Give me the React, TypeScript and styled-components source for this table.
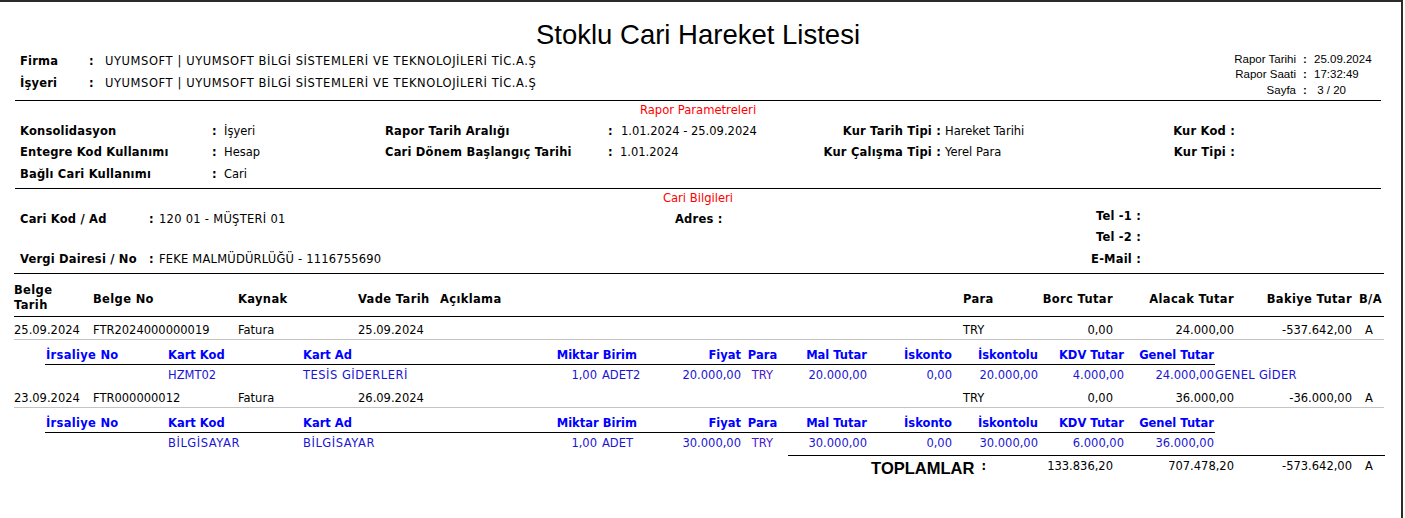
import React from 'react';
import styled, { createGlobalStyle } from 'styled-components';

const GlobalStyle = createGlobalStyle`
  html, body { margin: 0; padding: 0; background: #fff; }
  body {
    font-family: "DejaVu Sans", Verdana, sans-serif;
    font-size: 11.5px;
    color: #000;
  }
  * { box-sizing: border-box; }
`;

const Page = styled.div`
  width: 1403px;
  height: 518px;
  border-top: 2px solid #2b2b2b;
  border-right: 2px solid #2b2b2b;
  overflow: hidden;
`;

const Band = styled.section<{ $rule?: boolean }>`
  margin-left: 15px;
  width: 1366px;
  border-bottom: ${(p) => (p.$rule ? '1px solid #000' : 'none')};
`;

const HeaderBand = styled(Band)`
  padding: 18px 0 2px;
`;

const Title = styled.h1`
  margin: 0;
  font: 400 27.5px/30px "Liberation Sans", Arial, sans-serif;
  text-align: center;
  color: #000;
`;

const InfoRow = styled.div`
  display: flex;
  justify-content: space-between;
  align-items: flex-start;
  height: 48px;
`;

const CompanyGrid = styled.div`
  display: grid;
  grid-template-columns: 69px 16px auto;
  grid-auto-rows: 22px;
  line-height: 22px;
  padding-left: 5px;
`;

const MetaGrid = styled.div`
  display: grid;
  grid-template-columns: auto 18px 67px;
  font: 400 11.5px/15.3px "Liberation Sans", Arial, sans-serif;
  padding-top: 2px;
`;

const MetaLabel = styled.span`
  text-align: right;
  white-space: nowrap;
`;

const MetaColon = styled.span`
  text-align: center;
  font-weight: bold;
`;

const Label = styled.span<{ $right?: boolean; $shift?: number }>`
  font-weight: bold;
  white-space: nowrap;
  letter-spacing: 0.2px;
  text-align: ${(p) => (p.$right ? 'right' : 'left')};
  padding-top: ${(p) => p.$shift ?? 0}px;
`;

const Value = styled.span<{ $pl?: number; $shift?: number; $track?: number }>`
  white-space: nowrap;
  padding-left: ${(p) => p.$pl ?? 0}px;
  padding-top: ${(p) => p.$shift ?? 0}px;
  letter-spacing: ${(p) => p.$track ?? 0}px;
`;

const SectionTitle = styled.div`
  color: #ff0000;
  font-size: 11.6px;
  line-height: 19.5px;
  text-align: center;
`;

const ParamBand = styled(Band)`
  padding-bottom: 3px;
`;

const ParamGrid = styled.div`
  display: grid;
  grid-template-columns: 192px 12px 161px 223px 12px 180px 141px 159px 135px;
  grid-auto-rows: 21.5px;
  line-height: 21.5px;
  padding-left: 5px;
`;

const CariGrid = styled.div`
  display: grid;
  grid-template-columns: 129px 10px 516px 300px 166px;
  grid-template-rows: repeat(3, 21.5px);
  line-height: 14px;
  padding-left: 5px;
`;

const Cell = styled.div<{ $col: number; $row: number; $end?: boolean }>`
  grid-column: ${(p) => p.$col};
  grid-row: ${(p) => p.$row};
  display: flex;
  justify-content: ${(p) => (p.$end ? 'flex-end' : 'flex-start')};
`;

const Table = styled.div`
  margin-left: 14px;
  width: 1370px;
  border-top: 1px solid #000;
`;

const mainCols = '79px 145px 120px 82px 523px 67px 83px 121px 118px 32px';

const HeadRow = styled.div`
  display: grid;
  grid-template-columns: ${mainCols};
  align-items: start;
  height: 43px;
  padding-top: 8.6px;
  border-bottom: 1px solid #000;
  font-weight: bold;
  line-height: 15.2px;
`;

const HeadCell = styled.div<{ $align?: string; $pl?: number; $single?: boolean }>`
  text-align: ${(p) => p.$align ?? 'left'};
  padding-left: ${(p) => p.$pl ?? 0}px;
  margin-top: ${(p) => (p.$single ? 9.5 : 0)}px;
  letter-spacing: 0.35px;
  white-space: nowrap;
`;

const DataRow = styled.div`
  display: grid;
  grid-template-columns: ${mainCols};
  height: 23px;
  padding-top: 3.5px;
  line-height: 18.5px;
  border-bottom: 1px solid #c4c4c4;
`;

const DataCell = styled.div<{ $align?: string; $pl?: number }>`
  text-align: ${(p) => p.$align ?? 'left'};
  padding-left: ${(p) => p.$pl ?? 0}px;
  white-space: nowrap;
`;

const SubBlock = styled.div`
  margin-left: 31px;
  width: 1170px;
`;

const subCols = '123px 135px 197px 98px 44px 100px 41px 85px 85px 86px 86px 90px 0px';

const SubHead = styled.div`
  display: grid;
  grid-template-columns: ${subCols};
  height: 25px;
  padding-top: 5.5px;
  line-height: 18.5px;
  border-bottom: 1px solid #000;
  font-weight: bold;
  color: #0000ff;
`;

const SubData = styled.div`
  display: grid;
  grid-template-columns: ${subCols};
  height: 20px;
  padding-top: 1px;
  line-height: 19px;
  color: #1a14d4;
`;

const SubCell = styled.div<{
  $align?: string;
  $pl?: number;
  $pr?: number;
  $span?: number;
  $tint?: string;
  $track?: number;
}>`
  grid-column: ${(p) => (p.$span ? `span ${p.$span}` : 'auto')};
  text-align: ${(p) => p.$align ?? 'left'};
  padding-left: ${(p) => p.$pl ?? 0}px;
  padding-right: ${(p) => p.$pr ?? 0}px;
  letter-spacing: ${(p) => p.$track ?? 0}px;
  white-space: nowrap;
  ${(p) => (p.$tint ? `color: ${p.$tint};` : '')}
`;

const TotalsRow = styled.div`
  display: grid;
  grid-template-columns: 242px 83px 121px 118px 32px;
  margin-top: 2px;
  margin-left: 774px;
  width: 597px;
  border-top: 1px solid #000;
  line-height: 20px;
`;

const TotalsLabel = styled.div`
  display: flex;
  justify-content: flex-end;
  align-items: flex-start;
  padding-right: 44px;
`;

const TotalsWord = styled.span`
  font: 700 16.5px/20px "Liberation Sans", Arial, sans-serif;
  padding-top: 2px;
  margin-right: 7px;
`;

const TotalsColon = styled.span`
  font-weight: bold;
`;

type Line = {
  tarih: string;
  no: string;
  kaynak: string;
  vade: string;
  borc: string;
  alacak: string;
  bakiye: string;
  item: {
    kod: string;
    kodTrack: number;
    ad: string;
    adTrack: number;
    miktar: string;
    birim: string;
    fiyat: string;
    mal: string;
    isk: string;
    iskl: string;
    kdv: string;
    genel: string;
    extra?: string;
  };
};

const lines: Line[] = [
  {
    tarih: '25.09.2024',
    no: 'FTR2024000000019',
    kaynak: 'Fatura',
    vade: '25.09.2024',
    borc: '0,00',
    alacak: '24.000,00',
    bakiye: '-537.642,00',
    item: {
      kod: 'HZMT02',
      kodTrack: 0,
      ad: 'TESİS GİDERLERİ',
      adTrack: 0.5,
      miktar: '1,00',
      birim: 'ADET2',
      fiyat: '20.000,00',
      mal: '20.000,00',
      isk: '0,00',
      iskl: '20.000,00',
      kdv: '4.000,00',
      genel: '24.000,00',
      extra: 'GENEL GİDER',
    },
  },
  {
    tarih: '23.09.2024',
    no: 'FTR000000012',
    kaynak: 'Fatura',
    vade: '26.09.2024',
    borc: '0,00',
    alacak: '36.000,00',
    bakiye: '-36.000,00',
    item: {
      kod: 'BİLGİSAYAR',
      kodTrack: 0.55,
      ad: 'BİLGİSAYAR',
      adTrack: 0.55,
      miktar: '1,00',
      birim: 'ADET',
      fiyat: '30.000,00',
      mal: '30.000,00',
      isk: '0,00',
      iskl: '30.000,00',
      kdv: '6.000,00',
      genel: '36.000,00',
    },
  },
];

const SubHeader = () => (
  <SubHead>
    <SubCell $pl={1} $track={0.3}>İrsaliye No</SubCell>
    <SubCell>Kart Kod</SubCell>
    <SubCell>Kart Ad</SubCell>
    <SubCell $span={2} $align="right" $pr={5}>Miktar Birim</SubCell>
    <SubCell $align="right" $pr={1}>Fiyat</SubCell>
    <SubCell $align="center">Para</SubCell>
    <SubCell $align="right" $pr={1}>Mal Tutar</SubCell>
    <SubCell $align="right" $pr={1}>İskonto</SubCell>
    <SubCell $align="right" $pr={1}>İskontolu</SubCell>
    <SubCell $align="right" $pr={1}>KDV Tutar</SubCell>
    <SubCell $align="right" $pr={1}>Genel Tutar</SubCell>
  </SubHead>
);

const company = 'UYUMSOFT | UYUMSOFT BİLGİ SİSTEMLERİ VE TEKNOLOJİLERİ TİC.A.Ş';

export default function App() {
  return (
    <>
      <GlobalStyle />
      <Page>
        <HeaderBand $rule>
          <Title>Stoklu Cari Hareket Listesi</Title>
          <InfoRow>
            <CompanyGrid>
              <Label>Firma</Label>
              <Label>:</Label>
              <Value $track={0.58}>{company}</Value>
              <Label>İşyeri</Label>
              <Label>:</Label>
              <Value $track={0.58}>{company}</Value>
            </CompanyGrid>
            <MetaGrid>
              <MetaLabel>Rapor Tarihi</MetaLabel>
              <MetaColon>:</MetaColon>
              <span>25.09.2024</span>
              <MetaLabel>Rapor Saati</MetaLabel>
              <MetaColon>:</MetaColon>
              <span>17:32:49</span>
              <MetaLabel>Sayfa</MetaLabel>
              <MetaColon>:</MetaColon>
              <span>&nbsp;3 / 20</span>
            </MetaGrid>
          </InfoRow>
        </HeaderBand>

        <ParamBand $rule>
          <SectionTitle>Rapor Parametreleri</SectionTitle>
          <ParamGrid>
            <Label>Konsolidasyon</Label>
            <Label>:</Label>
            <Value>İşyeri</Value>
            <Label>Rapor Tarih Aralığı</Label>
            <Label>:</Label>
            <Value $pl={1}>1.01.2024 - 25.09.2024</Value>
            <Label $right>Kur Tarih Tipi :</Label>
            <Value $pl={4}>Hareket Tarihi</Value>
            <Label $right>Kur Kod :</Label>

            <Label>Entegre Kod Kullanımı</Label>
            <Label>:</Label>
            <Value>Hesap</Value>
            <Label>Cari Dönem Başlangıç Tarihi</Label>
            <Label>:</Label>
            <Value>1.01.2024</Value>
            <Label $right>Kur Çalışma Tipi :</Label>
            <Value $pl={4}>Yerel Para</Value>
            <Label $right>Kur Tipi :</Label>

            <Label>Bağlı Cari Kullanımı</Label>
            <Label>:</Label>
            <Value>Cari</Value>
          </ParamGrid>
        </ParamBand>

        <Band>
          <SectionTitle>Cari Bilgileri</SectionTitle>
          <CariGrid>
            <Cell $col={1} $row={1}><Label $shift={3}>Cari Kod / Ad</Label></Cell>
            <Cell $col={2} $row={1}><Label $shift={3}>:</Label></Cell>
            <Cell $col={3} $row={1}><Value $shift={3} $track={0.28}>120 01 - MÜŞTERİ 01</Value></Cell>
            <Cell $col={4} $row={1}><Label $shift={3}>Adres :</Label></Cell>
            <Cell $col={5} $row={1} $end><Label>Tel -1 :</Label></Cell>
            <Cell $col={5} $row={2} $end><Label>Tel -2 :</Label></Cell>
            <Cell $col={1} $row={3}><Label>Vergi Dairesi / No</Label></Cell>
            <Cell $col={2} $row={3}><Label>:</Label></Cell>
            <Cell $col={3} $row={3}><Value $track={0.2}>FEKE MALMÜDÜRLÜĞÜ - 1116755690</Value></Cell>
            <Cell $col={5} $row={3} $end><Label>E-Mail :</Label></Cell>
          </CariGrid>
        </Band>

        <Table>
          <HeadRow>
            <HeadCell>Belge<br />Tarih</HeadCell>
            <HeadCell $single>Belge No</HeadCell>
            <HeadCell $single>Kaynak</HeadCell>
            <HeadCell $single>Vade Tarih</HeadCell>
            <HeadCell $single>Açıklama</HeadCell>
            <HeadCell $single>Para</HeadCell>
            <HeadCell $single $align="right">Borc Tutar</HeadCell>
            <HeadCell $single $align="right">Alacak Tutar</HeadCell>
            <HeadCell $single $align="right">Bakiye Tutar</HeadCell>
            <HeadCell $single $pl={7}>B/A</HeadCell>
          </HeadRow>

          {lines.map((l) => (
            <React.Fragment key={l.no}>
              <DataRow>
                <DataCell>{l.tarih}</DataCell>
                <DataCell>{l.no}</DataCell>
                <DataCell>{l.kaynak}</DataCell>
                <DataCell>{l.vade}</DataCell>
                <DataCell />
                <DataCell>TRY</DataCell>
                <DataCell $align="right">{l.borc}</DataCell>
                <DataCell $align="right">{l.alacak}</DataCell>
                <DataCell $align="right">{l.bakiye}</DataCell>
                <DataCell $pl={13}>A</DataCell>
              </DataRow>
              <SubBlock>
                <SubHeader />
                <SubData>
                  <SubCell />
                  <SubCell $track={l.item.kodTrack}>{l.item.kod}</SubCell>
                  <SubCell $track={l.item.adTrack}>{l.item.ad}</SubCell>
                  <SubCell $align="right" $pr={1}>{l.item.miktar}</SubCell>
                  <SubCell $pl={4}>{l.item.birim}</SubCell>
                  <SubCell $align="right" $pr={1}>{l.item.fiyat}</SubCell>
                  <SubCell $align="center" $tint="#4a14d0">TRY</SubCell>
                  <SubCell $align="right" $pr={1}>{l.item.mal}</SubCell>
                  <SubCell $align="right" $pr={1}>{l.item.isk}</SubCell>
                  <SubCell $align="right" $pr={1}>{l.item.iskl}</SubCell>
                  <SubCell $align="right" $pr={1}>{l.item.kdv}</SubCell>
                  <SubCell $align="right" $pr={1}>{l.item.genel}</SubCell>
                  <SubCell $track={0.3}>{l.item.extra ?? ''}</SubCell>
                </SubData>
              </SubBlock>
            </React.Fragment>
          ))}

          <TotalsRow>
            <TotalsLabel>
              <TotalsWord>TOPLAMLAR</TotalsWord>
              <TotalsColon>:</TotalsColon>
            </TotalsLabel>
            <DataCell $align="right">133.836,20</DataCell>
            <DataCell $align="right">707.478,20</DataCell>
            <DataCell $align="right">-573.642,00</DataCell>
            <DataCell $pl={13}>A</DataCell>
          </TotalsRow>
        </Table>
      </Page>
    </>
  );
}
